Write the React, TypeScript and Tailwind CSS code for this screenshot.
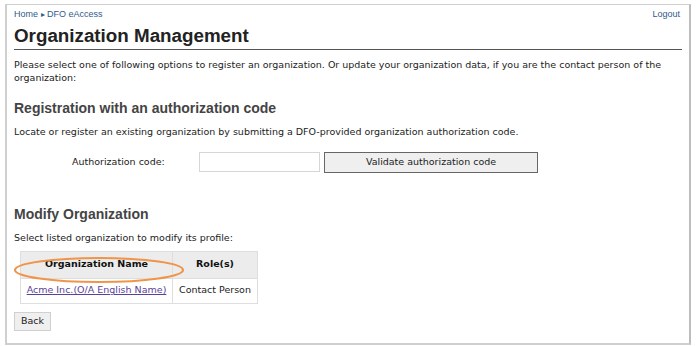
export default function App() {
  return (
    <div className="w-[700px] h-[346px] bg-white overflow-hidden">
      <div className="relative ml-[5px] mt-[4px] w-[686px] h-[341px] border-2 border-t border-[#cfcfcf] border-r-[#bdbdbd] px-[7px] text-[#222] font-['DejaVu_Sans',sans-serif]">
        <div className="flex justify-between pt-[3px] text-[9px] text-[#2f5b8c] font-['Liberation_Sans',sans-serif]">
          <span>
            Home <span className="text-[8px]">&#9656;</span> DFO eAccess
          </span>
          <span className="mr-[2px]">Logout</span>
        </div>
        <h1 className="mt-[3px] pb-[2px] border-b border-[#555] text-[18.8px] leading-[22px] font-bold text-[#222] font-['Liberation_Sans',sans-serif]">
          Organization Management
        </h1>
        <p className="mt-[8px] text-[9.5px] leading-[13px]">
          Please select one of following options to register an organization. Or update your organization data, if you are the contact person of the organization:
        </p>
        <h2 className="mt-[14px] text-[14px] leading-[20px] font-bold text-[#444] font-['Liberation_Sans',sans-serif]">
          Registration with an authorization code
        </h2>
        <p className="mt-[7px] text-[9.5px] leading-[13px]">
          Locate or register an existing organization by submitting a DFO-provided organization authorization code.
        </p>
        <div className="mt-[14px] flex items-center">
          <label className="w-[185px] pl-[58px] text-[9.5px]">Authorization code:</label>
          <input className="w-[121px] h-[20px] border border-[#d6d6d6] bg-white" />
          <button className="ml-[4px] w-[214px] h-[21px] border border-[#666] bg-[#efefef] text-[9.5px] text-[#222]">
            Validate authorization code
          </button>
        </div>
        <h2 className="mt-[31px] text-[14px] leading-[20px] font-bold text-[#444] font-['Liberation_Sans',sans-serif]">
          Modify Organization
        </h2>
        <p className="mt-[7px] text-[9.5px] leading-[13px]">Select listed organization to modify its profile:</p>
        <table className="mt-[7px] ml-[6px] border-collapse border border-[#e2e2e2] text-[9.5px]">
          <thead>
            <tr className="h-[27px] bg-[#ececec]">
              <th className="w-[152px] border border-[#dedede] font-bold text-[#111]">Organization Name</th>
              <th className="w-[85px] border border-[#dedede] font-bold text-[#111]">Role(s)</th>
            </tr>
          </thead>
          <tbody>
            <tr className="h-[25px]">
              <td className="border border-[#dedede] text-center">
                <a href="#" className="text-[#5b3f9a] underline">
                  Acme Inc.(O/A English Name)
                </a>
              </td>
              <td className="border border-[#dedede] text-center">Contact Person</td>
            </tr>
          </tbody>
        </table>
        <button className="mt-[8px] h-[19px] w-[37px] border border-[#d0d0d0] bg-[#efefef] text-[9.5px]">Back</button>
        <svg className="absolute left-[5px] top-[250px]" width="174" height="30" viewBox="0 0 174 30">
          <ellipse cx="87" cy="15" rx="84" ry="12" fill="none" stroke="#f0944a" strokeWidth="2.2" />
        </svg>
      </div>
    </div>
  );
}
